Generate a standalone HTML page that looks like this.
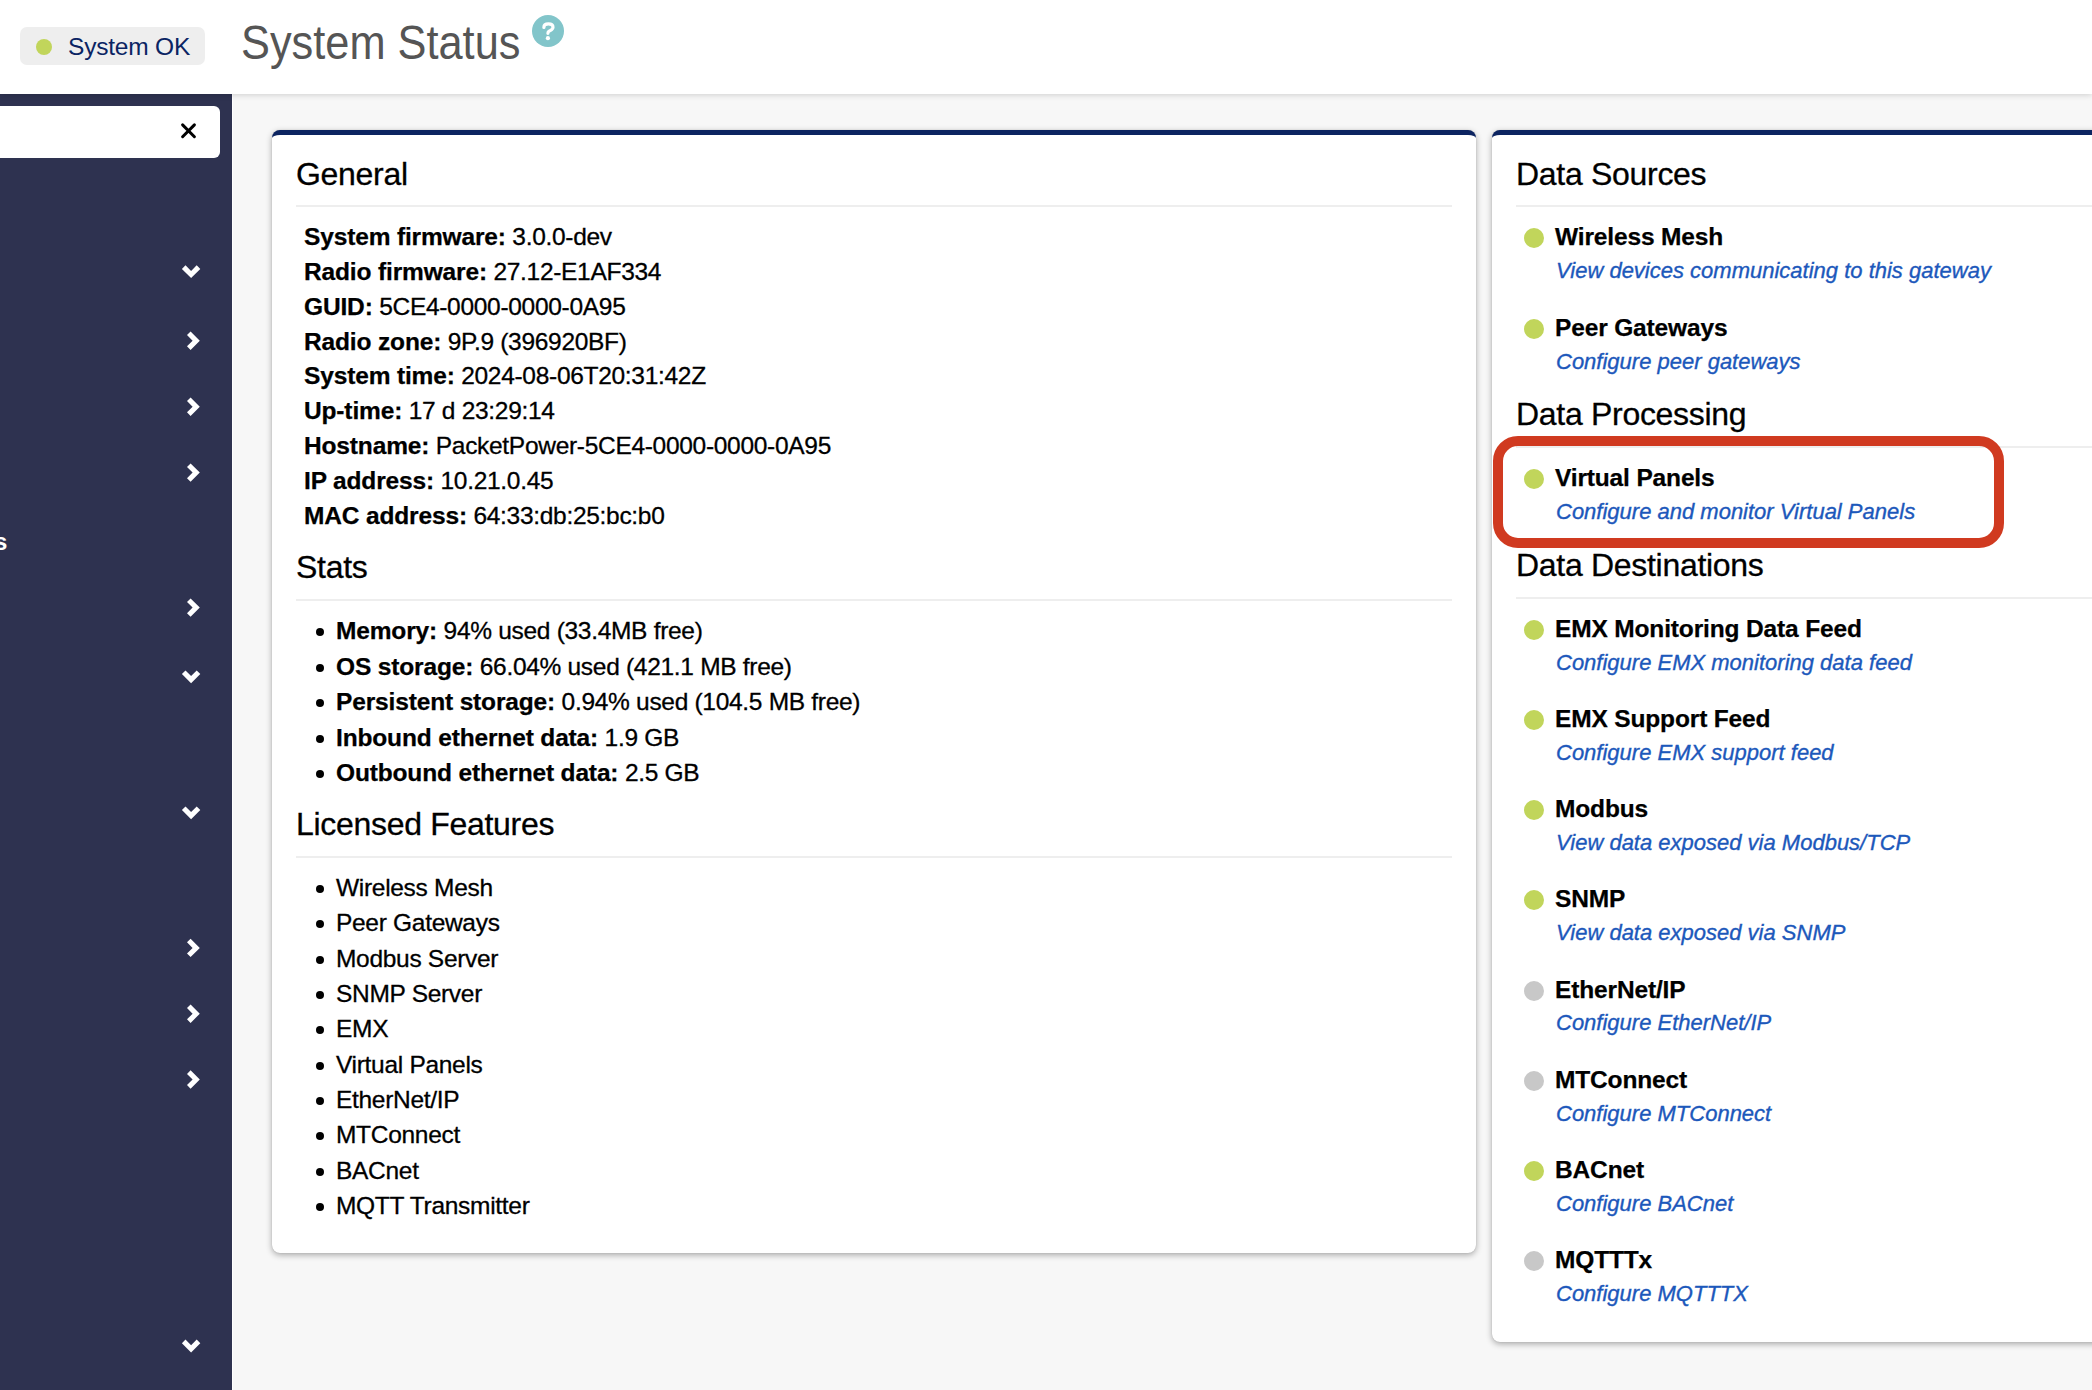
<!DOCTYPE html>
<html><head><meta charset="utf-8"><title>System Status</title>
<style>
*{box-sizing:border-box;margin:0;padding:0}
html,body{width:2092px;height:1390px;overflow:hidden;background:#f7f7f7;font-family:"Liberation Sans",sans-serif;color:#000}
#hdr{position:absolute;left:0;top:0;width:2092px;height:94px;background:#fff;z-index:3;box-shadow:0 1px 6px rgba(0,0,0,.16)}
.badge{position:absolute;left:20px;top:27px;width:185px;height:38px;background:#eee;border-radius:7px}
.badge .dot{position:absolute;left:16px;top:12px;width:16px;height:16px;border-radius:50%;background:#c1d55b}
.title{position:absolute;white-space:nowrap;color:#555;transform:scaleX(0.903);transform-origin:0 0}
.help{position:absolute;left:532px;top:15px;width:32px;height:32px;border-radius:50%;background:#82c5ca}
#side{position:absolute;left:0;top:0;width:232px;height:1390px;z-index:2}
#sidebg{position:absolute;left:0;top:94px;width:233px;height:1296px;background:#2e3250;border-right:1px solid #fff}
.search{position:absolute;left:-10px;top:106px;width:230px;height:52px;background:#fff;border-radius:6px}
.card{position:absolute;top:130px;background:#fff;border-radius:8px;border-top:5px solid #0c2461;box-shadow:0 2px 6px rgba(0,0,0,.32),0 0 1px rgba(0,0,0,.2)}
#c1{left:272px;width:1204px;height:1123px}
#c2{left:1492px;width:640px;height:1212px}
#layer{position:absolute;left:0;top:0;width:2092px;height:1390px;z-index:4}
.tx{position:absolute;white-space:nowrap}
.hr{position:absolute;height:2px;background:#eee}
b{font-weight:bold;letter-spacing:-0.15px;-webkit-text-stroke:0.25px #000}
.rg{letter-spacing:-0.3px;-webkit-text-stroke:0.3px #000}
.bul{position:absolute;width:8px;height:8px;border-radius:50%;background:#000}
.sd{position:absolute;width:20px;height:20px;border-radius:50%;background:#c1d55b}
.sd.g{background:#c8c8c8}
.lk{color:#1c58bb;font-style:italic;-webkit-text-stroke:0.35px #1c58bb}
.chev{position:absolute}
.redbox{position:absolute;left:1493px;top:436px;width:511px;height:112px;border:10px solid #d03a20;border-radius:25px}
</style></head>
<body>
<div id="hdr">
  <div class="badge"><div class="dot"></div><div class="tx" style="left:48px;top:4.5px;font-size:24.5px;line-height:30px;color:#0a2463;letter-spacing:-0.2px">System OK</div></div>
  <div class="tx title" style="left:241px;top:14.6px;font-size:48px;line-height:56px">System Status</div>
  <div class="help"></div>
  <svg style="position:absolute;left:0;top:0" width="600" height="94" viewBox="0 0 600 94"><path d="M543.9 27.4 C543.9 24.6 545.9 23.9 548.4 23.9 C551.1 23.9 553.0 25.1 553.0 27.2 C553.0 29.5 550.6 30.2 549.1 31.2 C548.0 31.9 547.9 32.5 547.9 33.3" fill="none" stroke="#fff" stroke-width="3.2" stroke-linecap="round"/><circle cx="547.9" cy="38.2" r="2.1" fill="#fff"/></svg>
</div>
<div id="side">
  <div id="sidebg"></div>
  <div class="search"></div>
  <div class="tx" style="left:-100px;width:107.4px;text-align:right;top:523.8px;font-size:24.5px;line-height:36px;font-weight:bold;color:#fff">s</div>
<svg style="position:absolute;left:0;top:0" width="232" height="1390" viewBox="0 0 232 1390"><polygon points="200.30,268.90 191.10,278.10 181.90,268.90 185.50,265.30 191.10,270.90 196.70,265.30" fill="#fff"/><polygon points="190.60,331.50 199.80,340.70 190.60,349.90 187.00,346.30 192.60,340.70 187.00,335.10" fill="#fff"/><polygon points="190.60,397.50 199.80,406.70 190.60,415.90 187.00,412.30 192.60,406.70 187.00,401.10" fill="#fff"/><polygon points="190.60,463.40 199.80,472.60 190.60,481.80 187.00,478.20 192.60,472.60 187.00,467.00" fill="#fff"/><polygon points="190.60,598.40 199.80,607.60 190.60,616.80 187.00,613.20 192.60,607.60 187.00,602.00" fill="#fff"/><polygon points="200.30,674.10 191.10,683.30 181.90,674.10 185.50,670.50 191.10,676.10 196.70,670.50" fill="#fff"/><polygon points="200.30,810.00 191.10,819.20 181.90,810.00 185.50,806.40 191.10,812.00 196.70,806.40" fill="#fff"/><polygon points="190.60,938.70 199.80,947.90 190.60,957.10 187.00,953.50 192.60,947.90 187.00,942.30" fill="#fff"/><polygon points="190.60,1004.50 199.80,1013.70 190.60,1022.90 187.00,1019.30 192.60,1013.70 187.00,1008.10" fill="#fff"/><polygon points="190.60,1070.30 199.80,1079.50 190.60,1088.70 187.00,1085.10 192.60,1079.50 187.00,1073.90" fill="#fff"/><polygon points="200.30,1343.20 191.10,1352.40 181.90,1343.20 185.50,1339.60 191.10,1345.20 196.70,1339.60" fill="#fff"/><path d="M182.6 124.9 L194.4 136.7 M194.4 124.9 L182.6 136.7" stroke="#000" stroke-width="3" stroke-linecap="round"/></svg>
</div>
<div class="card" id="c1"></div>
<div class="card" id="c2"></div>
<div id="layer">
<div class="tx rg" style="left:296px;top:151.51px;font-size:32px;line-height:45px;">General</div>
<div class="hr" style="left:296px;top:205px;width:1156px"></div>
<div class="tx rg" style="left:304px;top:218.91px;font-size:24.5px;line-height:35px;"><b>System firmware:</b> 3.0.0-dev</div>
<div class="tx rg" style="left:304px;top:253.79px;font-size:24.5px;line-height:35px;"><b>Radio firmware:</b> 27.12-E1AF334</div>
<div class="tx rg" style="left:304px;top:288.66px;font-size:24.5px;line-height:35px;"><b>GUID:</b> 5CE4-0000-0000-0A95</div>
<div class="tx rg" style="left:304px;top:323.54px;font-size:24.5px;line-height:35px;"><b>Radio zone:</b> 9P.9 (396920BF)</div>
<div class="tx rg" style="left:304px;top:358.41px;font-size:24.5px;line-height:35px;"><b>System time:</b> 2024-08-06T20:31:42Z</div>
<div class="tx rg" style="left:304px;top:393.29px;font-size:24.5px;line-height:35px;"><b>Up-time:</b> 17 d 23:29:14</div>
<div class="tx rg" style="left:304px;top:428.16px;font-size:24.5px;line-height:35px;"><b>Hostname:</b> PacketPower-5CE4-0000-0000-0A95</div>
<div class="tx rg" style="left:304px;top:463.04px;font-size:24.5px;line-height:35px;"><b>IP address:</b> 10.21.0.45</div>
<div class="tx rg" style="left:304px;top:497.91px;font-size:24.5px;line-height:35px;"><b>MAC address:</b> 64:33:db:25:bc:b0</div>
<div class="tx rg" style="left:296px;top:544.61px;font-size:32px;line-height:45px;">Stats</div>
<div class="hr" style="left:296px;top:599px;width:1156px"></div>
<div class="bul" style="left:316px;top:628.10px"></div>
<div class="tx rg" style="left:336px;top:613.01px;font-size:24.5px;line-height:35px;"><b>Memory:</b> 94% used (33.4MB free)</div>
<div class="bul" style="left:316px;top:663.65px"></div>
<div class="tx rg" style="left:336px;top:648.56px;font-size:24.5px;line-height:35px;"><b>OS storage:</b> 66.04% used (421.1 MB free)</div>
<div class="bul" style="left:316px;top:699.20px"></div>
<div class="tx rg" style="left:336px;top:684.11px;font-size:24.5px;line-height:35px;"><b>Persistent storage:</b> 0.94% used (104.5 MB free)</div>
<div class="bul" style="left:316px;top:734.75px"></div>
<div class="tx rg" style="left:336px;top:719.66px;font-size:24.5px;line-height:35px;"><b>Inbound ethernet data:</b> 1.9 GB</div>
<div class="bul" style="left:316px;top:770.30px"></div>
<div class="tx rg" style="left:336px;top:755.21px;font-size:24.5px;line-height:35px;"><b>Outbound ethernet data:</b> 2.5 GB</div>
<div class="tx rg" style="left:296px;top:802.41px;font-size:32px;line-height:45px;">Licensed Features</div>
<div class="hr" style="left:296px;top:856px;width:1156px"></div>
<div class="bul" style="left:316px;top:885.10px"></div>
<div class="tx rg" style="left:336px;top:870.01px;font-size:24.5px;line-height:35px;">Wireless Mesh</div>
<div class="bul" style="left:316px;top:920.43px"></div>
<div class="tx rg" style="left:336px;top:905.34px;font-size:24.5px;line-height:35px;">Peer Gateways</div>
<div class="bul" style="left:316px;top:955.76px"></div>
<div class="tx rg" style="left:336px;top:940.67px;font-size:24.5px;line-height:35px;">Modbus Server</div>
<div class="bul" style="left:316px;top:991.09px"></div>
<div class="tx rg" style="left:336px;top:976.00px;font-size:24.5px;line-height:35px;">SNMP Server</div>
<div class="bul" style="left:316px;top:1026.42px"></div>
<div class="tx rg" style="left:336px;top:1011.33px;font-size:24.5px;line-height:35px;">EMX</div>
<div class="bul" style="left:316px;top:1061.75px"></div>
<div class="tx rg" style="left:336px;top:1046.66px;font-size:24.5px;line-height:35px;">Virtual Panels</div>
<div class="bul" style="left:316px;top:1097.08px"></div>
<div class="tx rg" style="left:336px;top:1081.99px;font-size:24.5px;line-height:35px;">EtherNet/IP</div>
<div class="bul" style="left:316px;top:1132.41px"></div>
<div class="tx rg" style="left:336px;top:1117.32px;font-size:24.5px;line-height:35px;">MTConnect</div>
<div class="bul" style="left:316px;top:1167.74px"></div>
<div class="tx rg" style="left:336px;top:1152.65px;font-size:24.5px;line-height:35px;">BACnet</div>
<div class="bul" style="left:316px;top:1203.07px"></div>
<div class="tx rg" style="left:336px;top:1187.98px;font-size:24.5px;line-height:35px;">MQTT Transmitter</div>
<div class="tx rg" style="left:1516px;top:151.51px;font-size:32px;line-height:45px;">Data Sources</div>
<div class="hr" style="left:1516px;top:205px;width:600px"></div>
<div class="sd" style="left:1524px;top:228.10px"></div>
<div class="tx rg" style="left:1555px;top:219.11px;font-size:24.5px;line-height:35px;"><b>Wireless Mesh</b></div>
<div class="tx lk" style="left:1556px;top:254.98px;font-size:22px;line-height:31px;">View devices communicating to this gateway</div>
<div class="sd" style="left:1524px;top:319.10px"></div>
<div class="tx rg" style="left:1555px;top:310.11px;font-size:24.5px;line-height:35px;"><b>Peer Gateways</b></div>
<div class="tx lk" style="left:1556px;top:345.98px;font-size:22px;line-height:31px;">Configure peer gateways</div>
<div class="tx rg" style="left:1516px;top:391.71px;font-size:32px;line-height:45px;">Data Processing</div>
<div class="hr" style="left:1516px;top:446px;width:600px"></div>
<div class="sd" style="left:1524px;top:468.70px"></div>
<div class="tx rg" style="left:1555px;top:459.71px;font-size:24.5px;line-height:35px;"><b>Virtual Panels</b></div>
<div class="tx lk" style="left:1556px;top:495.58px;font-size:22px;line-height:31px;">Configure and monitor Virtual Panels</div>
<div class="tx rg" style="left:1516px;top:542.71px;font-size:32px;line-height:45px;">Data Destinations</div>
<div class="hr" style="left:1516px;top:597px;width:600px"></div>
<div class="sd" style="left:1524px;top:619.70px"></div>
<div class="tx rg" style="left:1555px;top:610.71px;font-size:24.5px;line-height:35px;"><b>EMX Monitoring Data Feed</b></div>
<div class="tx lk" style="left:1556px;top:646.58px;font-size:22px;line-height:31px;">Configure EMX monitoring data feed</div>
<div class="sd" style="left:1524px;top:709.90px"></div>
<div class="tx rg" style="left:1555px;top:700.91px;font-size:24.5px;line-height:35px;"><b>EMX Support Feed</b></div>
<div class="tx lk" style="left:1556px;top:736.78px;font-size:22px;line-height:31px;">Configure EMX support feed</div>
<div class="sd" style="left:1524px;top:800.10px"></div>
<div class="tx rg" style="left:1555px;top:791.11px;font-size:24.5px;line-height:35px;"><b>Modbus</b></div>
<div class="tx lk" style="left:1556px;top:826.98px;font-size:22px;line-height:31px;">View data exposed via Modbus/TCP</div>
<div class="sd" style="left:1524px;top:890.30px"></div>
<div class="tx rg" style="left:1555px;top:881.31px;font-size:24.5px;line-height:35px;"><b>SNMP</b></div>
<div class="tx lk" style="left:1556px;top:917.18px;font-size:22px;line-height:31px;">View data exposed via SNMP</div>
<div class="sd g" style="left:1524px;top:980.50px"></div>
<div class="tx rg" style="left:1555px;top:971.51px;font-size:24.5px;line-height:35px;"><b>EtherNet/IP</b></div>
<div class="tx lk" style="left:1556px;top:1007.38px;font-size:22px;line-height:31px;">Configure EtherNet/IP</div>
<div class="sd g" style="left:1524px;top:1070.70px"></div>
<div class="tx rg" style="left:1555px;top:1061.71px;font-size:24.5px;line-height:35px;"><b>MTConnect</b></div>
<div class="tx lk" style="left:1556px;top:1097.58px;font-size:22px;line-height:31px;">Configure MTConnect</div>
<div class="sd" style="left:1524px;top:1160.90px"></div>
<div class="tx rg" style="left:1555px;top:1151.91px;font-size:24.5px;line-height:35px;"><b>BACnet</b></div>
<div class="tx lk" style="left:1556px;top:1187.78px;font-size:22px;line-height:31px;">Configure BACnet</div>
<div class="sd g" style="left:1524px;top:1251.10px"></div>
<div class="tx rg" style="left:1555px;top:1242.11px;font-size:24.5px;line-height:35px;"><b>MQTTTx</b></div>
<div class="tx lk" style="left:1556px;top:1277.98px;font-size:22px;line-height:31px;">Configure MQTTTX</div>
<div class="redbox"></div>
</div>
</body></html>
